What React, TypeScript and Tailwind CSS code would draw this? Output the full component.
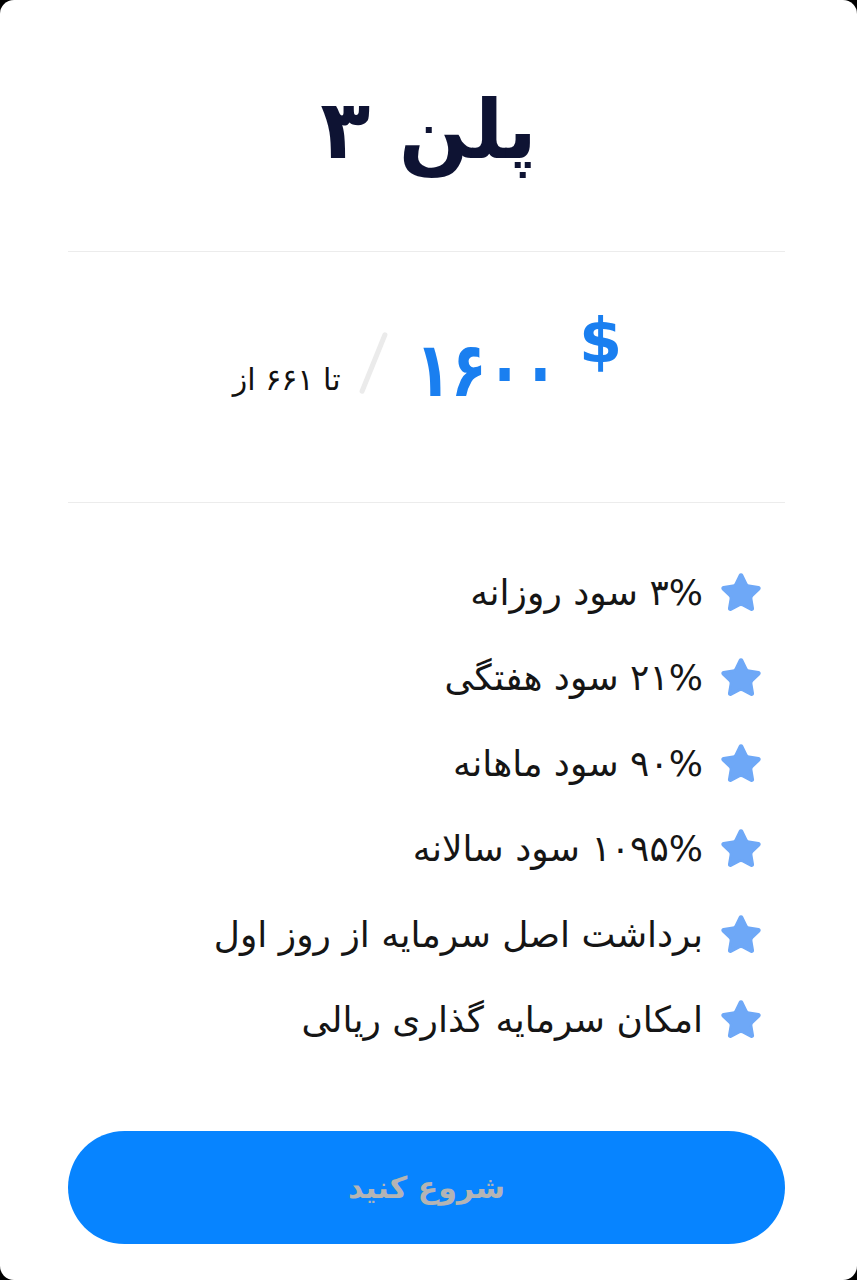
import { Star } from "lucide-react";

const features = [
  "۳% سود روزانه",
  "۲۱% سود هفتگی",
  "۹۰% سود ماهانه",
  "۱۰۹۵% سود سالانه",
  "برداشت اصل سرمایه از روز اول",
  "امکان سرمایه گذاری ریالی",
];

export default function App() {
  return (
    <div className="bg-black min-h-[1280px] w-full">
      <div
        dir="rtl"
        className="bg-white rounded-[14px] min-h-[1280px] w-full flex flex-col font-['DejaVu_Sans',sans-serif]"
      >
        {/* title */}
        <div className="h-[251px] flex items-center justify-center">
          <h1 className="text-[82px] font-bold text-[#0e1333] leading-none mt-[8px]">
            پلن ۳
          </h1>
        </div>
        <div className="h-px bg-[#ececec] ml-[68px] mr-[72px]" />

        {/* price */}
        <div className="h-[250px] flex items-center justify-center">
          <div dir="ltr" className="flex flex-row items-center -mt-[28px] -ml-[2px]">
            <span dir="rtl" className="text-[30px] text-[#111] leading-none mt-[34px]">
              تا ۶۶۱ از
            </span>
            <div className="w-[5px] h-[66px] bg-[#ebebeb] rotate-[22deg] rounded-full ml-[30px]" />
            <span className="inline-block scale-x-[0.77] text-[76px] font-bold text-[#1a7ff0] leading-none ml-[18px] mt-[14px]">
              ۱۶۰۰
            </span>
            <span className="text-[62px] font-bold text-[#1a7ff0] leading-none -mt-[44px]">
              $
            </span>
          </div>
        </div>
        <div className="h-px bg-[#ececec] ml-[68px] mr-[72px]" />

        {/* features */}
        <ul className="flex flex-col gap-[42.5px] pr-[94px] pt-[68px]">
          {features.map((f) => (
            <li key={f} className="flex flex-row items-center gap-[16px] h-[43px]">
              <Star
                size={44}
                fill="#6ea8f7"
                color="#6ea8f7"
                strokeWidth={1.5}
                strokeLinejoin="round"
              />
              <span className="text-[36px] text-[#151515] leading-none">
                {f}
              </span>
            </li>
          ))}
        </ul>

        {/* button */}
        <div className="ml-[68px] mr-[72px] mt-[89px]">
          <button className="w-full h-[113px] rounded-full bg-[#0784ff] text-[#b4b4b4] text-[30px] font-bold">
            شروع کنید
          </button>
        </div>
      </div>
    </div>
  );
}
